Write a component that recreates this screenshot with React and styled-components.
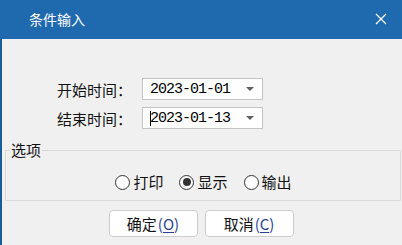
import React from "react";
import styled, { createGlobalStyle } from "styled-components";

const Global = createGlobalStyle`
  html, body { margin: 0; padding: 0; background: #f0f0f0; }
  body { font-family: "Noto Sans CJK SC", "Noto Sans", sans-serif; }
  * { box-sizing: border-box; }
`;

const Window = styled.div`
  width: 402px;
  height: 245px;
  display: flex;
  flex-direction: column;
  background: #f0f0f0;
  overflow: hidden;
`;

const TitleBar = styled.div`
  height: 39px;
  flex: none;
  background: #1f69ae;
  display: flex;
  align-items: center;
  justify-content: space-between;
  padding: 0 15px 0 29px;
  color: #fff;
  font-size: 14px;
`;

const Title = styled.span`
  line-height: 1;
  margin-top: -1px;
`;

const CloseBtn = styled.div`
  width: 13px;
  height: 13px;
  display: flex;
  align-items: center;
  justify-content: center;
  margin-top: -1px;
`;

const Body = styled.div`
  flex: 1;
  display: flex;
  flex-direction: column;
  border-left: 2px solid #1b5c98;
  padding-top: 39px;
`;

const Fields = styled.div`
  display: flex;
  flex-direction: column;
  gap: 7px;
  padding-left: 55px;
`;

const Row = styled.div`
  display: flex;
  align-items: center;
  height: 22px;
`;

const Label = styled.span`
  width: 85px;
  font-size: 15px;
  color: #111;
  line-height: 1;
`;

const Combo = styled.div`
  width: 121px;
  height: 22px;
  background: #fff;
  border: 1px solid #c4c4c4;
  display: flex;
  align-items: center;
  justify-content: space-between;
  padding: 0 8px 0 7px;
  position: relative;
`;

const ComboText = styled.span`
  font-family: "Liberation Mono", "DejaVu Sans Mono", monospace;
  font-size: 15px;
  letter-spacing: -1px;
  color: #000;
  line-height: 1;
`;

const Caret = styled.span`
  position: absolute;
  left: 7px;
  top: 3px;
  width: 1px;
  height: 15px;
  background: #000;
`;

const Arrow = styled.span`
  width: 0;
  height: 0;
  border-left: 4px solid transparent;
  border-right: 4px solid transparent;
  border-top: 4px solid #606060;
`;

const Group = styled.fieldset`
  margin: 12px 1px 0 3px;
  padding: 14px 0 9px;
  border: 1px solid #dadada;
  min-width: 0;
`;

const Legend = styled.legend`
  padding: 0 1px;
  margin-left: 4px;
  font-size: 15px;
  line-height: 18px;
  color: #111;
`;

const Radios = styled.div`
  display: flex;
  justify-content: center;
  gap: 16px;
  padding-left: 1px;
`;

const RadioItem = styled.label`
  display: flex;
  align-items: center;
  gap: 3px;
  font-size: 15px;
  color: #111;
  line-height: 18px;
`;

const Circle = styled.span`
  width: 15px;
  height: 15px;
  border-radius: 50%;
  border: 1px solid #333;
  background: #fff;
  display: flex;
  align-items: center;
  justify-content: center;
  &::after {
    content: "";
    width: 8px;
    height: 8px;
    border-radius: 50%;
    background: ${(p) => (p.$checked ? "#333" : "transparent")};
  }
`;

const Buttons = styled.div`
  display: flex;
  justify-content: center;
  gap: 7px;
  margin-top: 9px;
  padding-right: 2px;
`;

const Button = styled.div`
  width: 89px;
  height: 27px;
  background: #fff;
  border: 1px solid #cdcdcd;
  border-radius: 4px;
  display: flex;
  align-items: center;
  justify-content: center;
  font-size: 15px;
  color: #111;
  line-height: 1;
`;

const Mnemonic = styled.span`
  color: #2b3f8f;
  margin-left: 1px;
  u { text-underline-offset: 2px; }
`;

function Radio({ label, checked }) {
  return (
    <RadioItem>
      <Circle $checked={checked} />
      {label}
    </RadioItem>
  );
}

export default function App() {
  return (
    <>
      <Global />
      <Window>
        <TitleBar>
          <Title>条件输入</Title>
          <CloseBtn>
            <svg width="12" height="12" viewBox="0 0 12 12">
              <path d="M1 1 L11 11 M11 1 L1 11" stroke="#fff" strokeWidth="1.3" />
            </svg>
          </CloseBtn>
        </TitleBar>
        <Body>
          <Fields>
            <Row>
              <Label>开始时间：</Label>
              <Combo>
                <ComboText>2023-01-01</ComboText>
                <Arrow />
              </Combo>
            </Row>
            <Row>
              <Label>结束时间：</Label>
              <Combo>
                <Caret />
                <ComboText>2023-01-13</ComboText>
                <Arrow />
              </Combo>
            </Row>
          </Fields>
          <Group>
            <Legend>选项</Legend>
            <Radios>
              <Radio label="打印" />
              <Radio label="显示" checked />
              <Radio label="输出" />
            </Radios>
          </Group>
          <Buttons>
            <Button>
              确定<Mnemonic>(<u>O</u>)</Mnemonic>
            </Button>
            <Button>
              取消<Mnemonic>(<u>C</u>)</Mnemonic>
            </Button>
          </Buttons>
        </Body>
      </Window>
    </>
  );
}
